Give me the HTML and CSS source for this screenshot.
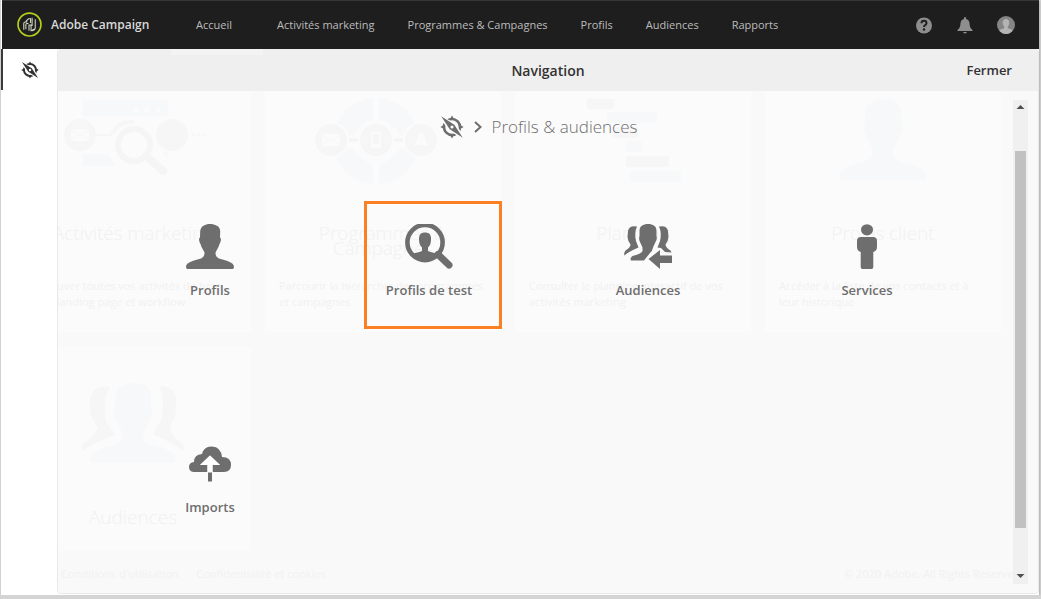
FILE: index.html
```html
<!DOCTYPE html>
<html lang="fr">
<head>
<meta charset="utf-8">
<title>Adobe Campaign</title>
<link rel="stylesheet" href="styles.css">
</head>
<body>
<svg class="defs" aria-hidden="true">
  <symbol id="compass" viewBox="0 0 24 24">
    <circle cx="12" cy="12" r="8" fill="none" stroke="currentColor" stroke-width="2.600"/>
    <path d="M12 .6l2.200 3.700H9.800zM12 23.400l2.200-3.700H9.800zM.4 12l3.700-2.200v4.400zM23.600 12l-3.700-2.200v4.400z" fill="currentColor"/>
    <path class="compass-gap" d="M2.500 1.500L15.500 8.500 23.500 21 21.500 23 8.500 15.500 .5 3z"/>
    <path d="M1.200 1.200L14.300 9.700 22.800 22.800 9.700 14.300zM12 10.400a1.600 1.600 0 1 0 0 3.200 1.600 1.600 0 0 0 0-3.200z" fill="currentColor" fill-rule="evenodd"/>
  </symbol>
  <symbol id="person" viewBox="0 0 48 45">
    <path d="M24 0C29 0 34 2 34.200 7L34 13.500C35.500 14 35 18 33.500 20 32.500 24 30.500 26 29.500 28.500 29.500 31 30 33 33 34.500 40 36.500 48 38 48 43Q48 45 46.500 45H1.500Q0 45 0 43C0 38 8 36.500 15 34.500 18 33 18.500 31 18.500 28.500 17.500 26 15.500 24 14.500 20 13 18 12.500 14 14 13.500L14.200 7C15 2 19 0 24 0z" fill="currentColor"/>
  </symbol>
  <symbol id="mail" viewBox="0 0 18 12"><path d="M0 0h18v12H0z" fill="#fbfbfb"/><path d="M0 1l9 6 9-6M0 11l6-5M18 11l-6-5" fill="none" stroke="#f6f6f6"/></symbol>
</svg>
<div class="app">
  <header class="topbar">
    <a class="brand" href="#">
      <svg class="logo" viewBox="0 0 24 24" aria-hidden="true"><g fill="none"><circle cx="12" cy="12" r="11" stroke="#b8d01c" stroke-width="1.600"/><path d="M6.500 17V11q0-1.500 1.500-1.500H10M8.500 16.500V12q0-1 1-1h1.500M8.500 9L11 6.500h2v4M11.500 18v-5.500h2v5.500l3-1.500M14.500 5.500v8M17.500 7v8q0 2-3 3" stroke="#d5dcc3"/></g></svg>
      <span>Adobe Campaign</span>
    </a>
    <nav class="menu">
      <a href="#">Accueil</a><a href="#">Activités marketing</a><a href="#">Programmes &amp; Campagnes</a><a href="#">Profils</a><a href="#">Audiences</a><a href="#">Rapports</a>
    </nav>
    <div class="tools">
      <button type="button" aria-label="Aide"><svg viewBox="0 0 18 18"><circle cx="9" cy="9.500" r="8" fill="#8e8e8e"/><path d="M6.500 7.200C6.500 4 11.500 4 11.500 7.200 11.500 9 9 9 9 11" fill="none" stroke="#1e1e1e" stroke-width="2"/><circle cx="9" cy="13.500" r="1.200" fill="#1e1e1e"/></svg></button>
      <button type="button" aria-label="Notifications"><svg viewBox="0 0 18 18"><path d="M8 1.500Q9 .5 10 1.500V3q3 .5 3.500 4 0 5 3 7v1h-15v-1q3-2 3-7Q5 3.500 8 3zM7 16h4q-2 3-4 0z" fill="#8e8e8e"/></svg></button>
      <button type="button" aria-label="Compte"><svg viewBox="0 0 18 18"><circle cx="9" cy="9" r="9" fill="#858585"/><path d="M9 3c4 0 4 5.500 1.800 7.500v1.800c2 .7 4 1 4.800 2.200Q13 18 9 18T2.400 14.500c.8-1.200 2.800-1.500 4.800-2.200v-1.800C5 8.500 5 3 9 3z" fill="#b4b4b4"/></svg></button>
    </div>
  </header>
  <div class="main">
    <aside class="rail"><button type="button" class="rail-button" aria-label="Navigation"><svg class="rail-icon"><use href="#compass"/></svg></button></aside>
    <section class="panel">
      <div class="panel-head"><h1>Navigation</h1><button type="button">Fermer</button></div>
      <div class="panel-body">
        <div class="backdrop" aria-hidden="true">
          <div class="cards">
            <article class="card">
              <svg class="art" viewBox="8 1 150 90"><path d="M33 2h85v16H33zM33 56h25l8 12H33zM112 54h6v8z" fill="#f6f8fa"/><g fill="#fbfbfb"><circle cx="86" cy="12" r="3"/><circle cx="97" cy="12" r="3"/><circle cx="108" cy="12" r="3"/></g><g fill="#f6f6f6"><circle cx="30" cy="37" r="16"/><circle cx="122" cy="37" r="16"/><circle cx="144" cy="37" r="1.500"/><circle cx="149" cy="37" r="1.500"/><circle cx="154" cy="37" r="1.500"/></g><path d="M46 37h16" stroke="#f6f6f6" stroke-width="2"/><path d="M62 36Q70 22 84 24" fill="none" stroke="#f6f6f6" stroke-width="4"/><g fill="none" stroke="#f5f5f5"><circle cx="84" cy="47" r="16" stroke-width="6"/><path d="M96 58l17 15" stroke-width="8" stroke-linecap="round"/></g><use href="#mail" x="21" y="31" width="18" height="12"/></svg>
              <h2>Activités marketing</h2><p>Retrouver toutes vos activités de type SMS, landing page et workflow</p>
            </article>
            <article class="card">
              <svg class="art" viewBox="5 1 150 90"><path d="M31 36A43 42 0 0 1 70 0V21Q56 25 50 38zM76 0A43 42 0 0 1 115 36L97 38Q91 25 76 21zM31 51A43 42 0 0 0 70 86V66Q56 62 50 50zM76 86A43 42 0 0 0 115 51L97 50Q91 62 76 66z" fill="#f6f8fa"/><path d="M28 42h90" stroke="#f4f4f4" stroke-width="3"/><g fill="#f6f6f6" stroke="#fbfbfb" stroke-width="2"><circle cx="28" cy="42" r="17"/><circle cx="73" cy="42" r="17"/><circle cx="118" cy="42" r="17"/></g><use href="#mail" x="19" y="36" width="18" height="12"/><path d="M70 36h6v10h-6zM68 34v16h10V34z" fill="#fbfbfb" fill-rule="evenodd"/><path d="M118 34q4 1 4 8l3 5h-14l3-5q0-7 4-8z" fill="#fbfbfb"/></svg>
              <h2>Programmes &amp;<br>Campagnes</h2><p>Parcourir la hiérarchie des programmes et campagnes</p>
            </article>
            <article class="card">
              <svg class="art" viewBox="0 1 150 90"><g fill="#f6f6f6"><rect x="29" y="0" width="27" height="11" rx="2"/><rect x="55" y="29" width="25" height="11" rx="2"/><rect x="68" y="58" width="43" height="11" rx="2"/></g><g fill="#f6f8fa"><rect x="49" y="14" width="50" height="11" rx="2"/><rect x="68" y="43" width="16" height="11" rx="2"/><rect x="72" y="73" width="51" height="11" rx="2"/></g></svg>
              <h2>Planning</h2><p>Consulter le planning interactif de vos activités marketing</p>
            </article>
            <article class="card">
              <svg class="art" viewBox="0 2 150 90"><use class="pale-blue" href="#person" x="32" y="2" width="86" height="81"/></svg>
              <h2>Profils client</h2><p>Accéder à la liste de vos contacts et à leur historique</p>
            </article>
            <article class="card">
              <svg class="art" viewBox="0 2 150 90"><path d="M52 6Q34 4 32 18V28Q32 36 40 46 37 56 25 62 23 66 24 70Q36 62 57 54L48 41Q44 18 52 6zM101 5Q117 5 118 18V28Q118 38 112 44 111 54 123 61 127 65 126 70 115 62 95 53L103 40Q108 18 101 5z" fill="#f6f6f6"/><use class="pale-blue" href="#person" x="32" y="2" width="86" height="80"/></svg>
              <h2>Audiences</h2><p>Accéder à la liste de vos audiences</p>
            </article>
          </div>
          <div class="legal"><span>Conditions d'utilisation</span><span>Confidentialité et cookies</span><span class="copyright">© 2020 Adobe. All Rights Reserved.</span></div>
        </div>
        <div class="content">
          <div class="crumbs"><svg class="crumb-icon"><use href="#compass"/></svg><svg class="chevron" viewBox="0 0 8 12"><path d="M1 1l5.500 5L1 11" fill="none" stroke="currentColor" stroke-width="2"/></svg><span>Profils &amp; audiences</span></div>
          <div class="tiles">
            <a class="tile" href="#"><svg class="tile-icon" viewBox="0 0 48 46"><use href="#person" width="48" height="45"/></svg><span>Profils</span></a>
            <a class="tile marked" href="#"><svg class="tile-icon" viewBox="0 0 48 46"><circle cx="20" cy="18.500" r="17.600" fill="none" stroke="currentColor" stroke-width="4.600"/><path d="M20 8.500c4 0 6 2 6 6 0 5-1 7-3 9v3.500c3 2 8 1.500 11 3L28 35q-8 4-16 0L6 30c3-1.500 8-1 11-3v-3.500c-2-2-3-4-3-9 0-4 2-6 6-6z" fill="currentColor"/><path d="M33 30.500L44 41" stroke="currentColor" stroke-width="7" stroke-linecap="round"/></svg><span>Profils de test</span></a>
            <a class="tile" href="#"><svg class="tile-icon" viewBox="0 0 48 46"><g fill="currentColor"><path d="M13 2.500Q5 1 4 7L3.500 13Q4 18 6.500 20.500 6.500 23.500 1.500 26.500 0 28 .3 31.500 4 28 14.500 23.500L12 17Q10 9 13 2.500zM35 2.500Q43 1 44 7L44.500 13Q44 18 41.500 20.500 42 24 46.500 26.500L47.500 28.500 41 28 37 24 33.500 23.500 36 17Q38 9 35 2.500z"/><path d="M24 0C29 0 32.500 2 32.500 7V12Q33.500 15 31.500 18L29 23.500Q28.500 27 26 29L20 36.500H7Q5.500 34 8.500 32 17 30 18.500 27V23.500L16 18Q14.500 15 15.500 12V7C15.500 2 19 0 24 0zM24.500 35L36 26V31.500H48V39H36V45z"/></g></svg><span>Audiences</span></a>
            <a class="tile" href="#"><svg class="tile-icon" viewBox="0 0 48 46"><g fill="currentColor"><ellipse cx="24" cy="5.800" rx="6" ry="5.600"/><path d="M18 13H30Q34 13 34 17V23Q34 27 30.300 28V43Q30.300 45 28.500 45H19.500Q17.700 45 17.700 43V28Q14 27 14 23V17Q14 13 18 13z"/></g></svg><span>Services</span></a>
            <a class="tile" href="#"><svg class="tile-icon" viewBox="0 0 48 46"><path d="M7.500 31Q3 30.500 3 26 3 21.500 8 21 8 13.500 16 13 18 5 26 5.500 35 6 36 16 45 16 45 24 45 31 38 31H26.500V24H34L24 14.500 14 24H21.500V31z" fill="currentColor"/><path d="M21.500 24H26.500V31H21.500zM14 24L24 14.500 34 24z" fill="#fff"/><path d="M22 31.500H26V40.500H22z" fill="currentColor"/></svg><span>Imports</span></a>
          </div>
        </div>
        <div class="scroller"><svg viewBox="0 0 15 15"><path d="M3.500 9h8L7.500 5z" fill="#505050"/></svg><div class="track"><div class="thumb"></div></div><svg viewBox="0 0 15 15"><path d="M3.500 5h8L7.500 9z" fill="#505050"/></svg></div>
      </div>
    </section>
  </div>
</div>
</body>
</html>
```

FILE: styles.css
```css
*, *::before, *::after { box-sizing: border-box; }
body { margin: 0; background: #d4d4d4; font-family: "Open Sans", "Noto Sans", sans-serif; color: #6e6e6e; }
h1, h2, p { margin: 0; }
button { border: 0; padding: 0; background: none; font: inherit; color: inherit; }
a { color: inherit; text-decoration: none; }
svg { display: block; flex: none; }
.defs { position: absolute; width: 0; height: 0; }
.app { display: flex; flex-direction: column; min-height: calc(100vh - 4px); margin-right: 2px; border-left: 1px solid #d0d0d0; background: #fff; box-shadow: 0 1px 3px #999; }
.topbar { display: flex; align-items: center; height: 49px; margin-left: 1px; padding: 0 24px 1px 15px; border-top: 1px solid #35363a; background: #1e1e1e; color: #bcbcbc; }
.brand { display: flex; align-items: center; gap: 9px; width: 179px; color: #d8d8d8; font-size: 12px; font-weight: 600; white-space: nowrap; }
.logo { width: 25px; height: 25px; }
.menu { display: flex; flex: 1; font-size: 11px; white-space: nowrap; }
.menu a { margin-right: 33px; }
.menu a:first-child { margin-right: 45px; }
.tools { display: flex; align-items: center; gap: 23px; }
.tools svg { width: 18px; height: 18px; }
.main { display: flex; flex: 1; padding-bottom: 1px; }
.rail { width: 56px; }
.rail-button { display: flex; align-items: center; justify-content: center; width: 100%; height: 41px; border-left: 2px solid #3a3a3a; color: #323232; }
.rail-icon { width: 18px; height: 18px; }
.compass-gap { fill: #fdfdfd; }
.panel { display: flex; flex: 1; flex-direction: column; min-width: 0; border: solid #e9e9e9; border-width: 0 1px 1px; border-radius: 4px; overflow: hidden; }
.panel-head { display: grid; grid-template-columns: 1fr auto 1fr; align-items: center; height: 42px; padding: 0 26px; background: #efefef linear-gradient(#f3f3f3, #f3f3f3) 113px 0 / 92px 6px no-repeat; color: #323232; }
.panel-head h1 { grid-column: 2; font-size: 14px; font-weight: 600; }
.panel-head button { justify-self: end; font-size: 13px; font-weight: 600; }
.panel-body { position: relative; display: flex; flex: 1; padding-left: 6px; background: #f9f9f9; }
.backdrop { position: absolute; inset: 0; display: flex; flex-direction: column; overflow: hidden; color: #f1f1f1; }
.cards { display: grid; flex: 1; grid-template-columns: repeat(4, 1fr); grid-auto-rows: 269px; gap: 15px 14px; min-height: 0; margin: -28px 37px 0 -43px; overflow: hidden; }
.card { padding: 36px 14px 0; background: #fbfbfb; }
.art { width: 150px; height: 90px; margin: 0 auto 37px; }
.pale-blue { color: #f6f8fa; }
.card h2 { min-height: 45px; font-size: 19px; font-weight: 300; line-height: 15px; text-align: center; }
.card:last-child h2 { min-height: 30px; }
.card p { padding-top: 7px; font-size: 11px; line-height: 16px; }
.legal { display: flex; gap: 18px; padding: 15px 0 11px 3px; font-size: 11px; line-height: 16px; white-space: nowrap; }
.copyright { margin-left: auto; margin-right: 15px; }
.content { position: relative; flex: 1; }
.crumbs { display: flex; align-items: center; justify-content: center; height: 71px; font-size: 17px; font-weight: 300; }
.crumb-icon { width: 24px; height: 24px; margin-right: 10px; }
.chevron { width: 8px; height: 12px; margin-right: 10px; }
.tiles { display: grid; grid-template-columns: repeat(4, 1fr); row-gap: 142px; max-width: 876px; margin: 0 auto; padding-top: 62px; }
.tile { position: relative; display: flex; flex-direction: column; align-items: center; gap: 11px; font-size: 13px; font-weight: 600; line-height: 18px; }
.tile-icon { width: 48px; height: 46px; }
.marked::after { content: ""; position: absolute; inset: -23px 37px auto 44px; height: 128px; border: 3px solid #fb8023; }
.scroller { position: relative; display: flex; flex-direction: column; width: 15px; margin: 9px 10px 9px 0; background: #f0f0f0; }
.track { flex: 1; padding: 36px 2px 41px; }
.thumb { height: 100%; background: #c1c1c1; }
```
